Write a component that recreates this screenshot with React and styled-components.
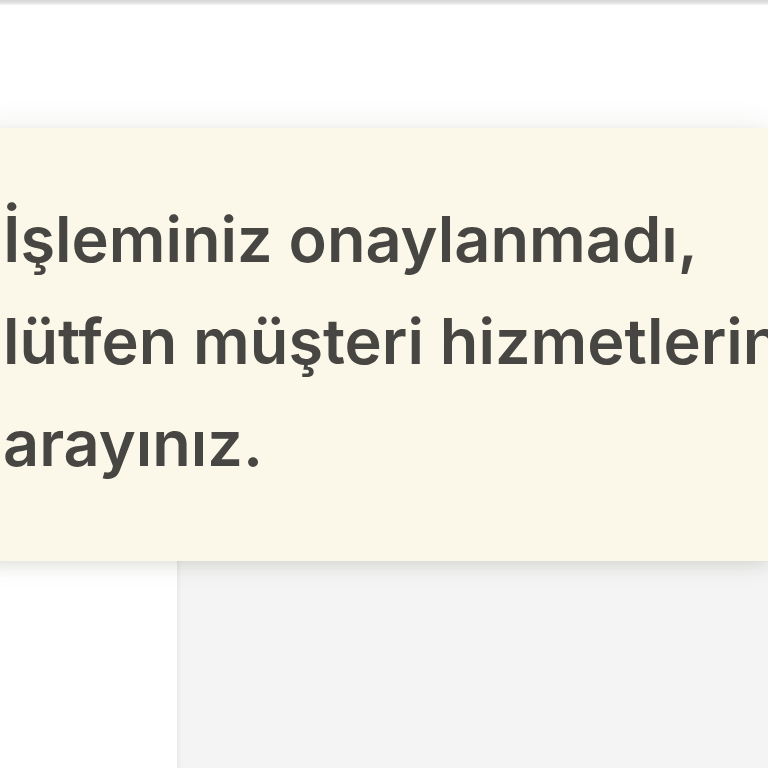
import React from "react";
import styled, { createGlobalStyle } from "styled-components";

const GlobalStyle = createGlobalStyle`
  html, body {
    margin: 0;
    padding: 0;
    background: #ffffff;
    overflow: hidden;
  }
  body {
    font-family: Inter, "Noto Sans", "DejaVu Sans", sans-serif;
  }
`;

export default function App() {
  return (
    <>
      <GlobalStyle />
      <Page>
        <TopEdge />
        <Header />
        <Notice>
          <Message>
            İşleminiz onaylanmadı,
            <br />
            lütfen müşteri hizmetlerini
            <br />
            arayınız.
          </Message>
        </Notice>
        <Body>
          <Sidebar />
          <Main />
        </Body>
      </Page>
    </>
  );
}

const Page = styled.div`
  width: 768px;
  height: 768px;
  display: flex;
  flex-direction: column;
  overflow: hidden;
`;

const TopEdge = styled.div`
  height: 5px;
  flex-shrink: 0;
  background: linear-gradient(#d6d6d6, #e4e4e4 60%, #f6f6f6);
`;

const Header = styled.div`
  height: 123px;
  flex-shrink: 0;
  background: #ffffff;
`;

const Notice = styled.div`
  position: relative;
  z-index: 1;
  flex-shrink: 0;
  height: 433px;
  margin-left: -20px;
  padding: 60px 0 0 23px;
  box-sizing: border-box;
  background: #fcf8e9;
  box-shadow: 0 0 28px rgba(60, 55, 20, 0.1), 0 6px 12px rgba(60, 60, 30, 0.08);
`;

const Message = styled.p`
  margin: 0;
  font-family: Inter, "Noto Sans", sans-serif;
  font-size: 63px;
  font-weight: 600;
  line-height: 102px;
  color: #484643;
  white-space: nowrap;
`;

const Body = styled.div`
  flex: 1;
  display: flex;
`;

const Sidebar = styled.div`
  width: 177px;
  background: #ffffff;
`;

const Main = styled.div`
  flex: 1;
  background: #f4f4f5;
  box-shadow: inset 4px 0 4px -2px rgba(0, 0, 0, 0.05);
`;
